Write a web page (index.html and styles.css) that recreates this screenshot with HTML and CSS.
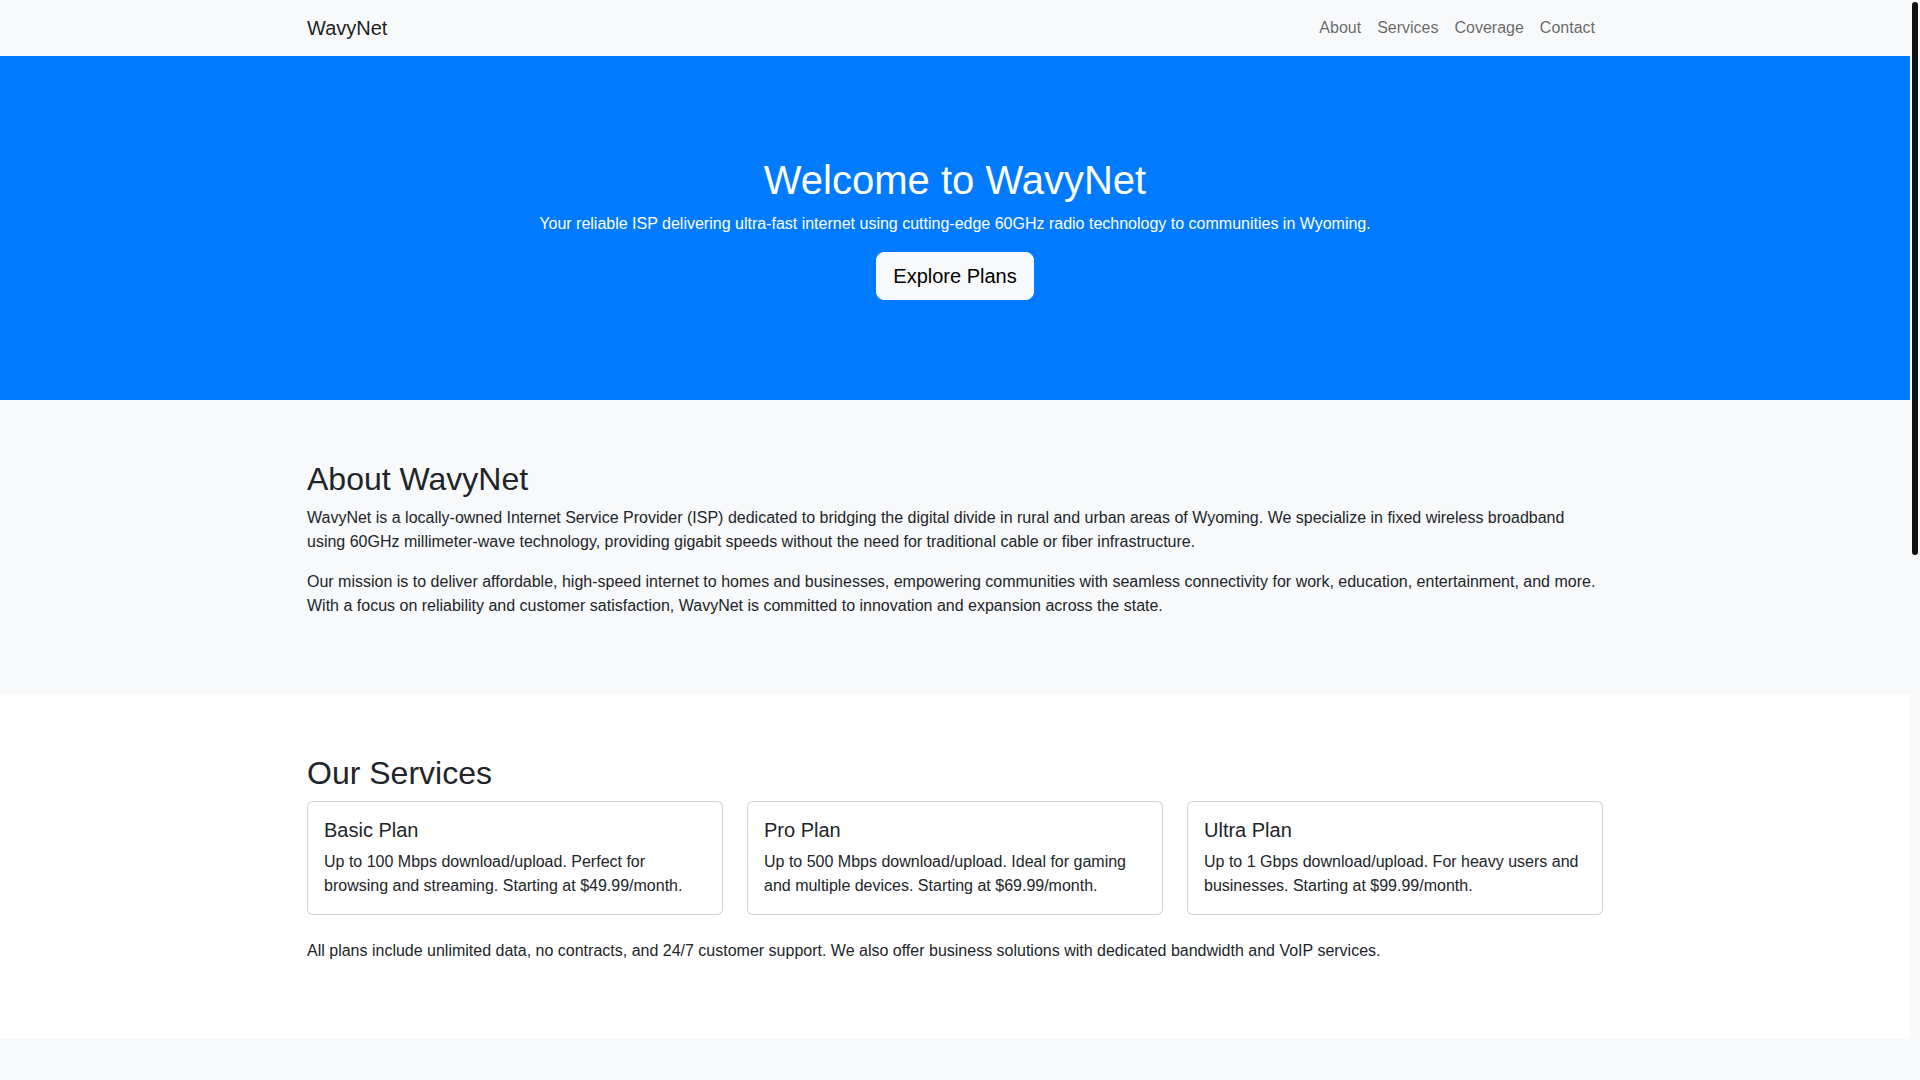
FILE: index.html
```html
<!DOCTYPE html>
<html lang="en">
<head>
<meta charset="utf-8">
<title>WavyNet - Fixed Wireless Internet in Wyoming</title>
<link rel="stylesheet" href="styles.css">
</head>
<body>
<div class="page">
<nav class="navbar">
  <div class="container navbar-inner">
    <a class="brand" href="#">WavyNet</a>
    <ul class="nav-links">
      <li><a href="#about">About</a></li>
      <li><a href="#services">Services</a></li>
      <li><a href="#coverage">Coverage</a></li>
      <li><a href="#contact">Contact</a></li>
    </ul>
  </div>
</nav>

<header class="hero">
  <div class="container hero-inner">
    <h1 class="hero-title">Welcome to WavyNet</h1>
    <p class="hero-text">Your reliable ISP delivering ultra-fast internet using cutting-edge 60GHz radio technology to communities in Wyoming.</p>
    <a class="btn-light" href="#services">Explore Plans</a>
  </div>
</header>

<section id="about" class="section section-light">
  <div class="container">
    <h2 class="section-title">About WavyNet</h2>
    <p>WavyNet is a locally-owned Internet Service Provider (ISP) dedicated to bridging the digital divide in rural and urban areas of Wyoming. We specialize in fixed wireless broadband using 60GHz millimeter-wave technology, providing gigabit speeds without the need for traditional cable or fiber infrastructure.</p>
    <p>Our mission is to deliver affordable, high-speed internet to homes and businesses, empowering communities with seamless connectivity for work, education, entertainment, and more. With a focus on reliability and customer satisfaction, WavyNet is committed to innovation and expansion across the state.</p>
  </div>
</section>

<section id="services" class="section">
  <div class="container">
    <h2 class="section-title">Our Services</h2>
    <div class="cards">
      <div class="card">
        <h5 class="card-title">Basic Plan</h5>
        <p class="card-text">Up to 100 Mbps download/upload. Perfect for browsing and streaming. Starting at $49.99/month.</p>
      </div>
      <div class="card">
        <h5 class="card-title">Pro Plan</h5>
        <p class="card-text">Up to 500 Mbps download/upload. Ideal for gaming and multiple devices. Starting at $69.99/month.</p>
      </div>
      <div class="card">
        <h5 class="card-title">Ultra Plan</h5>
        <p class="card-text">Up to 1 Gbps download/upload. For heavy users and businesses. Starting at $99.99/month.</p>
      </div>
    </div>
    <p>All plans include unlimited data, no contracts, and 24/7 customer support. We also offer business solutions with dedicated bandwidth and VoIP services.</p>
  </div>
</section>

<section id="coverage" class="section section-light">
  <div class="container">
    <h2 class="section-title">Coverage Area</h2>
    <p>WavyNet currently serves Cheyenne, Casper, Laramie, Gillette, Rock Springs, Sheridan and the surrounding rural communities. Our network of 60GHz towers is expanding every quarter.</p>
    <ul class="town-list">
      <li>Cheyenne and Laramie County</li>
      <li>Casper and Natrona County</li>
      <li>Laramie and Albany County</li>
      <li>Gillette and Campbell County</li>
      <li>Rock Springs and Sweetwater County</li>
      <li>Sheridan and Sheridan County</li>
    </ul>
    <p>Not sure if you are covered? Contact us for a free site survey at your address.</p>
  </div>
</section>

<section id="contact" class="section">
  <div class="container">
    <h2 class="section-title">Contact Us</h2>
    <p>Have questions or ready to sign up? Reach out to our local team.</p>
    <p>Phone: (307) 555-0123<br>Email: support@wavynet.com<br>Address: 123 Main Street, Cheyenne, WY 82001</p>
    <p>Office hours: Monday to Friday, 8am to 6pm. Technical support is available 24/7.</p>
  </div>
</section>

<footer class="footer">
  <div class="container">&copy; 2024 WavyNet. All rights reserved.</div>
</footer>
</div>

<div class="scrollbar" aria-hidden="true"><div class="scrollbar-thumb"></div></div>
</body>
</html>
```

FILE: styles.css
```css
* { box-sizing: border-box; }

html, body {
  margin: 0;
  padding: 0;
}

body {
  font-family: "Liberation Sans", Arial, Helvetica, sans-serif;
  font-size: 16px;
  line-height: 1.5;
  color: #212529;
  background: #fff;
}

/* page area leaves room for the window scrollbar */
.page {
  margin-right: 10px;
}

/* window scrollbar overlay */
.scrollbar {
  position: fixed;
  top: 0;
  right: 0;
  width: 10px;
  height: 100vh;
  background: #f8f9fa;
  padding: 2px 2px 0 2px;
}
.scrollbar-thumb {
  width: 6px;
  height: 553px;
  background: #111;
  border-radius: 3px;
}

a { text-decoration: none; }

.container {
  width: 1320px;
  margin: 0 auto;
  padding: 0 12px;
}

p { margin: 0 0 16px; }

/* Navbar */
.navbar {
  background: #f8f9fa;
  padding: 8px 0;
}
.navbar-inner {
  display: flex;
  align-items: center;
  justify-content: space-between;
}
.brand {
  font-size: 20px;
  line-height: 30px;
  padding: 5px 0;
  color: rgba(0, 0, 0, 0.9);
}
.nav-links {
  display: flex;
  list-style: none;
  margin: 0;
  padding: 0;
}
.nav-links a {
  display: block;
  padding: 8px;
  line-height: 24px;
  color: rgba(0, 0, 0, 0.6);
}

/* Hero */
.hero {
  background: #007bff;
  color: #fff;
  padding: 100px 0;
}
.hero-inner {
  display: flex;
  flex-direction: column;
  align-items: center;
  text-align: center;
}
.hero-title {
  font-size: 40px;
  font-weight: 500;
  line-height: 1.2;
  margin: 0 0 8px;
}
.hero-text {
  margin: 0 0 16px;
}
.btn-light {
  display: inline-block;
  background: #f8f9fa;
  color: #000;
  border: 1px solid #f8f9fa;
  border-radius: 8px;
  padding: 8px 16px;
  font-size: 20px;
  line-height: 30px;
}

/* Sections */
.section {
  padding: 60px 0;
  background: #fff;
}
.section-light { background: #f8f9fa; }

.section-title {
  font-size: 32px;
  font-weight: 500;
  line-height: 1.2;
  margin: 0 0 8px;
}

/* Cards */
.cards {
  display: grid;
  grid-template-columns: repeat(3, 1fr);
  column-gap: 24px;
  margin-bottom: 24px;
}
.card {
  border: 1px solid rgba(0, 0, 0, 0.175);
  border-radius: 6px;
  padding: 16px;
  background: #fff;
}
.card-title {
  font-size: 20px;
  font-weight: 500;
  line-height: 1.2;
  margin: 0 0 8px;
}
.card-text { margin: 0; }

.town-list {
  margin: 0 0 16px;
  padding-left: 32px;
}

.footer {
  background: #343a40;
  color: #fff;
  padding: 24px 0;
  text-align: center;
}
```
